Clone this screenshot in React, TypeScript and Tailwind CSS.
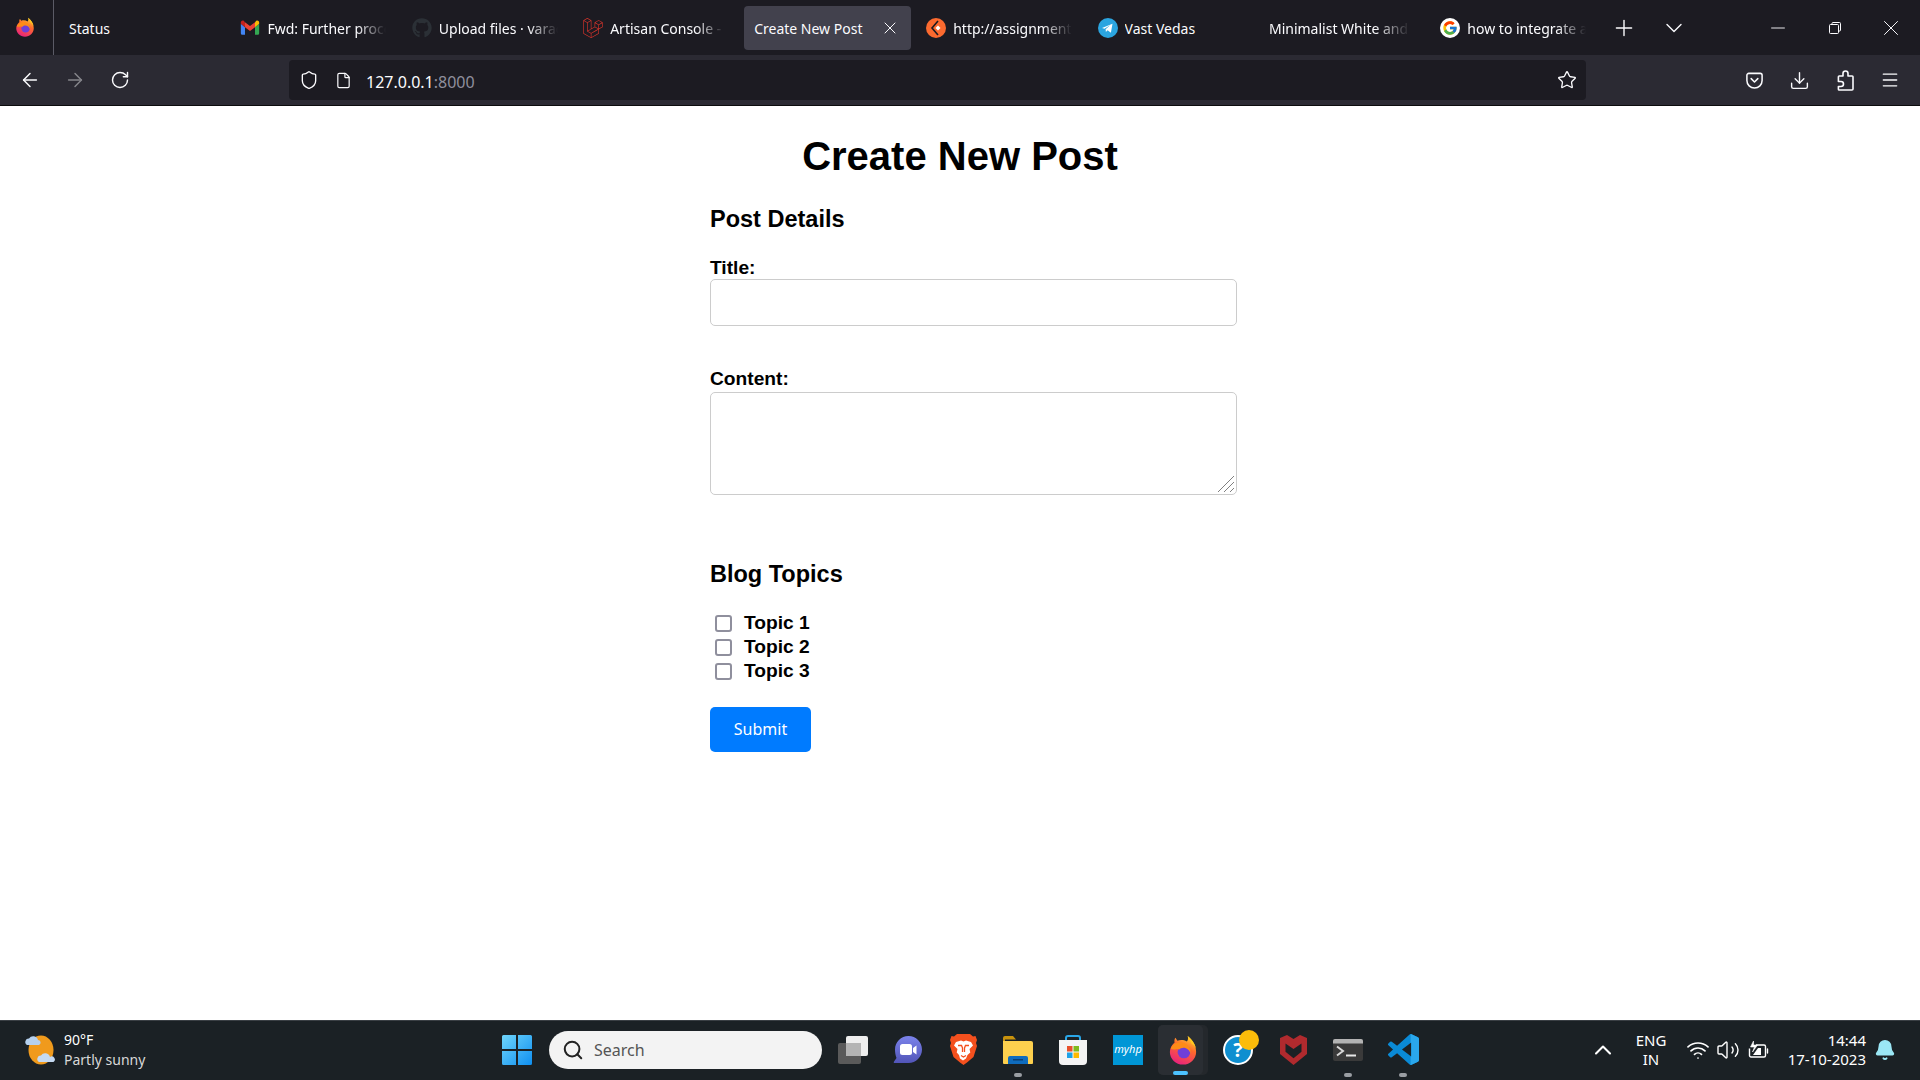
import { ArrowLeft, ArrowRight, RotateCw, Shield, File, Star, Download, Menu, Plus, ChevronDown, Minus, X, Search, Wifi, Volume2, Bell, ChevronUp } from 'lucide-react';
import { FaGithub, FaLaravel } from 'react-icons/fa';
import { FcGoogle } from 'react-icons/fc';
import type { ReactNode } from 'react';

const uiFont = "font-['Noto_Sans','Open_Sans',sans-serif]";

function FirefoxIcon({ size = 20, id }: { size?: number; id: string }) {
  return (
    <svg width={size} height={size} viewBox="0 0 32 32">
      <defs>
        <linearGradient id={id} x1="0.75" y1="0" x2="0.3" y2="1">
          <stop offset="0" stopColor="#ffd52e" />
          <stop offset="0.4" stopColor="#ff6a2b" />
          <stop offset="1" stopColor="#e8207f" />
        </linearGradient>
      </defs>
      <path d="M21 1c1 3 0 5-1 6-3-2-7-2-10-1L8 3C7 4 6.500 6 7 8c-3 3-5 6-5 10 0 7.500 6.300 13.500 14 13.500S30 25.500 30 18c0-7-4-13-9-17z" fill={`url(#${id})`} />
      <circle cx="17" cy="18" r="6.800" fill="#6f3fd8" />
      <path d="M3 15c1-5 7-8 12-7 6 1 10 6 9 12-1-4-4-6.500-7.500-6.500-2 0-3.500.8-4.500 2l-3-.5C7 16 5 15.500 3 15z" fill="#ff8b17" />
      <path d="M21 1c4 3 8 8 9 14-1-3-3-5-5-6-1-3-3-5-4-8z" fill="#ffc91f" />
    </svg>
  );
}

function GmailIcon() {
  return (
    <svg width="20" height="20" viewBox="0 0 24 24">
      <path d="M2 20h4V11L1 7v11a2 2 0 0 0 1 2z" fill="#4285f4" />
      <path d="M18 20h4a2 2 0 0 0 1-2V7l-5 4z" fill="#34a853" />
      <path d="M18 5v6l5-4V5.500c0-2-2.200-3-3.700-1.900z" fill="#fbbc04" />
      <path d="M6 11V5l6 4.500L18 5v6l-6 4.500z" fill="#ea4335" />
      <path d="M1 5.500V7l5 4V5L4.700 3.600C3.200 2.500 1 3.500 1 5.500z" fill="#c5221f" />
    </svg>
  );
}

function KiteIcon() {
  return (
    <svg width="20" height="20" viewBox="0 0 20 20">
      <circle cx="10" cy="10" r="10" fill="#fc6a2f" />
      <path d="M12 3 6 10l6 7" fill="none" stroke="#1c1b22" strokeWidth="1.600" />
      <path d="M12 7.500 14.500 10 12 12.500 9.500 10z" fill="#fff" />
    </svg>
  );
}

function TelegramIcon() {
  return (
    <svg width="20" height="20" viewBox="0 0 20 20">
      <circle cx="10" cy="10" r="10" fill="#2ba5e0" />
      <path d="M4 10l10.500-4.300-1.600 9-3.300-2.400-1.700 1.600-.3-2.700 4.800-4.100-5.900 3.600z" fill="#fff" />
    </svg>
  );
}

function PocketIcon() {
  return (
    <svg width="19" height="19" viewBox="0 0 20 20" fill="none" stroke="#fbfbfe" strokeWidth="1.600" strokeLinecap="round" strokeLinejoin="round">
      <path d="M2 4.500A2 2 0 0 1 4 2.500h12a2 2 0 0 1 2 2V10a8 8 0 0 1-16 0z" />
      <path d="M6.500 8 10 11.500 13.500 8" />
    </svg>
  );
}

function ExtensionIcon() {
  return (
    <svg width="19" height="21" viewBox="0 0 19 21" fill="none" stroke="#fbfbfe" strokeWidth="1.600" strokeLinejoin="round">
      <path d="M7 6V3.500a2.500 2.500 0 0 1 5 0V6h4.200a.8.8 0 0 1 .8.8V19a1 1 0 0 1-1 1H3.200a.8.8 0 0 1-.8-.8v-2.700H5a2.500 2.500 0 0 0 0-5H2.400V6.800a.8.8 0 0 1 .8-.8H7z" />
    </svg>
  );
}

function RestoreIcon() {
  return (
    <svg width="12" height="12" viewBox="0 0 12 12" fill="none" stroke="#fbfbfe" strokeWidth="1">
      <rect x="0.500" y="2.500" width="9" height="9" rx="1" />
      <path d="M3 2.500V1.500a1 1 0 0 1 1-1h6.500a1 1 0 0 1 1 1V8a1 1 0 0 1-1 1h-1" />
    </svg>
  );
}

function Tab({ icon, label, fade = true, textWidth = 'w-[119px]', className = '' }: { icon?: ReactNode; label: string; fade?: boolean; textWidth?: string; className?: string }) {
  return (
    <div className={`flex h-[44px] w-[171.400px] shrink-0 items-center ${className}`}>
      {icon && <span className="mr-[7px] flex h-5 w-5 shrink-0 items-center justify-center">{icon}</span>}
      <span
        className={`block ${textWidth} overflow-hidden whitespace-nowrap pt-[2px] text-[14px] text-[#fbfbfe] ${fade ? '[mask-image:linear-gradient(to_right,black_75%,transparent)]' : ''}`}
      >
        {label}
      </span>
    </div>
  );
}

function WindowsLogo() {
  return (
    <svg width="30" height="30" viewBox="0 0 30 30">
      <defs>
        <linearGradient id="winLogo" x1="0" y1="0" x2="1" y2="1">
          <stop offset="0" stopColor="#6fd5fb" />
          <stop offset="1" stopColor="#0f8ff0" />
        </linearGradient>
      </defs>
      <path d="M0 1.500A1.500 1.500 0 0 1 1.500 0H14v14H0zM16 0h12.500A1.500 1.500 0 0 1 30 1.500V14H16zM0 16h14v14H1.500A1.500 1.500 0 0 1 0 28.500zM16 16h14v12.500a1.500 1.500 0 0 1-1.500 1.500H16z" fill="url(#winLogo)" />
    </svg>
  );
}

function WeatherIcon() {
  return (
    <svg width="32" height="30" viewBox="0 0 32 30">
      <ellipse cx="17" cy="15" rx="12.500" ry="14.500" fill="#f09a1c" />
      <path d="M3 10a3.500 3.500 0 0 1 2-6.500 5 5 0 0 1 9 1.500 2.600 2.600 0 0 1 1 5z" fill="#b5d0ee" />
      <path d="M15 27a3.500 3.500 0 0 1 2-6.500 5 5 0 0 1 9 1.500 2.600 2.600 0 0 1 3.500 5z" fill="#c5daf2" />
    </svg>
  );
}

function TaskViewIcon() {
  return (
    <svg width="30" height="30" viewBox="0 0 30 30">
      <rect x="0" y="8" width="23" height="21" rx="2" fill="#5a5a5a" />
      <rect x="8" y="1" width="22" height="20" rx="2" fill="#eeeeee" />
      <rect x="8" y="8" width="15" height="13" fill="#b4b4b4" />
    </svg>
  );
}

function ChatIcon() {
  return (
    <svg width="30" height="30" viewBox="0 0 30 30">
      <defs>
        <linearGradient id="chatFill" x1="0.5" y1="0" x2="0.5" y2="1">
          <stop offset="0" stopColor="#7b83eb" />
          <stop offset="1" stopColor="#5255b8" />
        </linearGradient>
      </defs>
      <path d="M15.500 1C23 1 29 7 29 14.500S23 28 15.500 28H1.500c-.8 0-1-.8-.6-1.300L3.500 23C2.500 20.500 2 17.500 2 14.500 2 7 8 1 15.500 1z" fill="url(#chatFill)" />
      <rect x="7" y="9" width="12" height="11" rx="2.500" fill="#fff" />
      <path d="M20 13l3.500-2.500v9L20 17z" fill="#fff" />
    </svg>
  );
}

function BraveIcon() {
  return (
    <svg width="27" height="31" viewBox="0 0 27 31">
      <path d="M7 0h13l3 2.500 2.500-.5L27 6l-1 3 1 3-3.500 11L17 28.500 13.500 31 10 28.500 3.500 23 0 12l1-3-1-3 1.500-4L4 2.500z" fill="#f4501e" />
      <path d="M6 8l5-1.500 2.500 1 2.500-1L21 8l2 3.500-3.500 3.500.8 3.500-2.800 2.500-1.500 3.500-3 2-3-2L9 21 6.700 18.500 7.500 15 4 11.500z" fill="#fff" />
      <path d="M8 11.500h3.500l1 2.500v4M19 11.500h-3.500l-1 2.500v4M11 21.500l2.500 1.500 2.500-1.500" fill="none" stroke="#f4501e" strokeWidth="1.300" />
    </svg>
  );
}

function FolderIcon() {
  return (
    <svg width="30" height="28" viewBox="0 0 30 28">
      <path d="M0 2a2 2 0 0 1 2-2h8l3 3.500H2V6H0z" fill="#c9930d" />
      <path d="M0 5h28a2 2 0 0 1 2 2v20a1 1 0 0 1-1 1H1a1 1 0 0 1-1-1z" fill="#fdd04e" />
      <path d="M5 28v-6a2 2 0 0 1 2-2h16a2 2 0 0 1 2 2v6z" fill="#0f6cbd" />
      <rect x="10" y="23" width="10" height="1.500" fill="#0b3f73" />
    </svg>
  );
}

function StoreIcon() {
  return (
    <svg width="30" height="30" viewBox="0 0 30 30">
      <path d="M8 7V3a2 2 0 0 1 2-2h10a2 2 0 0 1 2 2v4" fill="none" stroke="#2aa7e8" strokeWidth="2" />
      <path d="M1 5h28v21a4 4 0 0 1-4 4H5a4 4 0 0 1-4-4z" fill="#f4f4f4" />
      <rect x="9" y="11" width="5.500" height="5.500" fill="#e8502b" />
      <rect x="15.500" y="11" width="5.500" height="5.500" fill="#7fba1c" />
      <rect x="9" y="17.500" width="5.500" height="5.500" fill="#1ea2e8" />
      <rect x="15.500" y="17.500" width="5.500" height="5.500" fill="#ffb900" />
    </svg>
  );
}

function McAfeeIcon() {
  return (
    <svg width="27" height="30" viewBox="0 0 27 30">
      <path fillRule="evenodd" d="M0 3 7 0l6.500 4L20 0l7 3v16L13.500 30 0 19zM5.500 8.500v8.300l8 6.400 8-6.400V8.500l-8 5.500z" fill="#b02a2e" />
    </svg>
  );
}

function TerminalIcon() {
  return (
    <svg width="30" height="22" viewBox="0 0 30 22">
      <rect width="30" height="22" rx="2" fill="#3a3a3a" />
      <path d="M0 2a2 2 0 0 1 2-2h26a2 2 0 0 1 2 2v2.500H0z" fill="#b3b3b3" />
      <path d="M4 7.500l6 4.500-6 4.500" fill="none" stroke="#d8d8d8" strokeWidth="2" />
      <rect x="13" y="15.500" width="10" height="2" fill="#e8e8e8" />
    </svg>
  );
}

function VsCodeIcon() {
  return (
    <svg width="31" height="31" viewBox="0 0 24 24">
      <path d="M23.150 2.587L18.210.21a1.494 1.494 0 0 0-1.705.29l-9.460 8.630-4.120-3.128a.999.999 0 0 0-1.276.057L.327 7.261A1 1 0 0 0 .326 8.740L3.899 12 .326 15.260a1 1 0 0 0 .001 1.479L1.650 17.940a.999.999 0 0 0 1.276.057l4.120-3.128 9.460 8.630a1.492 1.492 0 0 0 1.704.29l4.942-2.377A1.500 1.500 0 0 0 24 20.060V3.939a1.500 1.500 0 0 0-.850-1.352zm-5.146 14.861L10.826 12l7.178-5.448v10.896z" fill="#0a8ad6" />
      <path d="M17.500 0.080a1.500 1.500 0 0 1 .71.130l4.940 2.377A1.500 1.500 0 0 1 24 3.939v16.121a1.500 1.500 0 0 1-.85 1.352l-4.940 2.377a1.500 1.500 0 0 1-.71.13v-6.400l.504-.071V6.552l-.504.38z" fill="#2aa7ec" />
    </svg>
  );
}

function BatteryIcon() {
  return (
    <svg width="21" height="20" viewBox="0 0 21 20" fill="none" stroke="#fff" strokeWidth="1.400" strokeLinejoin="round">
      <path d="M8 5h8a1.500 1.500 0 0 1 1.500 1.500v9A1.500 1.500 0 0 1 16 17H3a1.500 1.500 0 0 1-1.500-1.500v-7" />
      <path d="M19.500 9v4" strokeLinecap="round" />
      <path d="M5.500 1 2.500 7h4l-2 5 5-7h-4z" fill="#fff" strokeWidth="0.600" />
      <path d="M5 15l5-7h3v7z" fill="#fff" stroke="none" />
    </svg>
  );
}

function TaskbarItem({ children, dot, active }: { children: ReactNode; dot?: boolean; active?: boolean }) {
  return (
    <div className={`relative flex h-[50px] w-[50px] items-center justify-center rounded-[5px] ${active ? 'bg-[#24282c]' : ''}`}>
      {active && <span className="absolute inset-y-0 left-0 w-[45px] rounded-[5px] bg-[#2a2e33]" />}
      <span className="relative flex items-center justify-center">{children}</span>
      {dot && <span className="absolute bottom-[-2px] left-[21px] h-[4px] w-[8px] rounded-full bg-[#9a9ea3]" />}
      {active && <span className="absolute bottom-0 left-[15px] h-[4px] w-[15px] rounded-full bg-[#4cc2ff]" />}
    </div>
  );
}

function Topic({ label }: { label: string }) {
  return (
    <label className="flex h-[24.300px] items-center text-[19.200px] font-bold text-black">
      <input type="checkbox" className="ml-[5px] mr-[12px] h-[17px] w-[17px] appearance-none rounded-[3px] border-2 border-[#8f8f9d] bg-white" />
      {label}
    </label>
  );
}

export default function App() {
  return (
    <div className={`flex h-screen w-[1920px] flex-col overflow-hidden bg-white ${uiFont}`}>
      {/* Tab strip */}
      <div className="flex h-[55px] shrink-0 items-center bg-[#1c1b22]">
        <div className="flex h-full w-[54px] shrink-0 items-center justify-center border-r border-[#5b5b66] pb-[2px] pr-[4px]">
          <FirefoxIcon id="ffTab" />
        </div>
        <Tab label="Status" className="ml-[15px]" fade={false} />
        <Tab icon={<GmailIcon />} label="Fwd: Further processing" />
        <Tab icon={<FaGithub size={20} color="#2b3036" />} label="Upload files · varadk" />
        <div className="flex w-[161px] shrink-0">
          <Tab icon={<FaLaravel size={20} color="#d9342b" />} label="Artisan Console - Laravel" textWidth="w-[114px]" />
        </div>
        <div className="flex h-[44px] w-[167px] shrink-0 items-center rounded-[4px] bg-[#42414d] pl-[10px] pr-[11px]">
          <span className="whitespace-nowrap pt-[2px] text-[14px] text-[#fbfbfe]">Create New Post</span>
          <X size={20} strokeWidth={1.200} color="#fbfbfe" className="ml-auto" />
        </div>
        <Tab icon={<KiteIcon />} label="http://assignments.local" className="ml-[15px]" />
        <Tab icon={<TelegramIcon />} label="Vast Vedas" fade={false} />
        <Tab label="Minimalist White and Black" textWidth="w-[141px]" />
        <Tab icon={<span className="flex h-5 w-5 items-center justify-center rounded-full bg-white"><FcGoogle size={16} /></span>} label="how to integrate a form" />
        <Plus size={26} strokeWidth={1.300} color="#fbfbfe" className="ml-[-1px] shrink-0" />
        <ChevronDown size={28} strokeWidth={1.200} color="#fbfbfe" className="ml-[23px] shrink-0" />
        <span className="ml-[70px] flex w-[40px] shrink-0 justify-center"><Minus size={22} strokeWidth={1} color="#fbfbfe" /></span>
        <span className="ml-[17px] flex w-[40px] shrink-0 justify-center"><RestoreIcon /></span>
        <span className="ml-[16px] flex w-[40px] shrink-0 justify-center"><X size={26} strokeWidth={0.900} color="#fbfbfe" /></span>
      </div>

      {/* Toolbar */}
      <div className="flex h-[50px] shrink-0 items-center bg-[#2b2a33]">
        <ArrowLeft size={22} strokeWidth={1.600} color="#fbfbfe" className="ml-[19px]" />
        <ArrowRight size={22} strokeWidth={1.600} color="#85858b" className="ml-[23px]" />
        <RotateCw size={20} strokeWidth={1.700} color="#fbfbfe" className="ml-[24px]" />
        <div className="ml-[159px] flex h-[40px] w-[1297px] items-center rounded-[4px] bg-[#1c1b22]">
          <Shield size={20} strokeWidth={1.600} color="#fbfbfe" className="ml-[10px]" />
          <File size={17} strokeWidth={1.700} color="#fbfbfe" className="ml-[16px]" />
          <span className="ml-[14px] pt-[3px] text-[16px] text-[#fbfbfe]">
            127.0.0.1<span className="text-[#8f8f9d]">:8000</span>
          </span>
          <Star size={20} strokeWidth={1.600} color="#fbfbfe" className="ml-auto mr-[9px]" />
        </div>
        <span className="ml-[159px]"><PocketIcon /></span>
        <Download size={21} strokeWidth={1.600} color="#fbfbfe" className="ml-[25px]" />
        <span className="ml-[26px]"><ExtensionIcon /></span>
        <Menu size={20} strokeWidth={1.600} color="#fbfbfe" className="ml-[25px]" />
      </div>
      <div className="h-px shrink-0 bg-[#0c0c0d]" />

      {/* Page */}
      <main className="min-h-0 flex-1 bg-white font-['Liberation_Sans',Arial,sans-serif] text-black">
        <div className="mx-auto w-[500px] pt-[27px]">
          <h1 className="text-center text-[40px] font-bold leading-[46px]">Create New Post</h1>
          <h2 className="mt-[27px] text-[23.500px] font-bold leading-[26px]">Post Details</h2>
          <form className="mt-[24px]">
            <label htmlFor="title" className="block text-[19.200px] font-bold leading-[23px]">Title:</label>
            <input id="title" type="text" className="block h-[47px] w-[527px] rounded-[5px] border border-[#cccccc] bg-white" />
            <label htmlFor="content" className="mt-[41px] block pb-[2px] text-[19.200px] font-bold leading-[23px]">Content:</label>
            <div className="relative w-[527px]">
              <textarea id="content" className="block h-[103px] w-[527px] resize-none rounded-[5px] border border-[#cccccc] bg-white" />
              <svg width="18" height="18" viewBox="0 0 18 18" className="absolute bottom-[2px] right-[2px]" stroke="#808080" strokeWidth="1" fill="none">
                <path d="M1 17 17 1M7 17 17 7M13 17l4-4" />
              </svg>
            </div>
            <h2 className="mt-[66px] text-[23.500px] font-bold leading-[26px]">Blog Topics</h2>
            <div className="mt-[24px]">
              <Topic label="Topic 1" />
              <Topic label="Topic 2" />
              <Topic label="Topic 3" />
            </div>
            <button type="button" className={`mt-[23px] block h-[45px] w-[101px] rounded-[5px] bg-[#007bff] text-[16px] text-white ${uiFont}`}>
              Submit
            </button>
          </form>
        </div>
      </main>

      {/* Windows taskbar */}
      <div className="flex h-[60px] shrink-0 items-center border-t border-[#3a3f44] bg-[#1b2125] pb-[2px] text-white">
        <span className="ml-[24px]"><WeatherIcon /></span>
        <div className="ml-[8px] w-[100px] text-[14px] leading-[20px]">
          <div>90°F</div>
          <div className="whitespace-nowrap text-[#d8d8d8]">Partly sunny</div>
        </div>
        <span className="ml-[338px]"><WindowsLogo /></span>
        <div className="ml-[17px] flex h-[38px] w-[273px] items-center rounded-full bg-[#f3f3f3]">
          <Search size={22} strokeWidth={2.200} color="#222" className="ml-[13px]" />
          <span className="ml-[10px] text-[16px] text-[#555]">Search</span>
        </div>
        <div className="ml-[6px] flex items-center gap-[5px]">
          <TaskbarItem><TaskViewIcon /></TaskbarItem>
          <TaskbarItem><ChatIcon /></TaskbarItem>
          <TaskbarItem><BraveIcon /></TaskbarItem>
          <TaskbarItem dot><FolderIcon /></TaskbarItem>
          <TaskbarItem><StoreIcon /></TaskbarItem>
          <TaskbarItem>
            <span className="flex h-[30px] w-[30px] items-center justify-center bg-[#0096d6] text-[11px] italic text-white">myhp</span>
          </TaskbarItem>
          <TaskbarItem active><FirefoxIcon size={30} id="ffTask" /></TaskbarItem>
          <TaskbarItem>
            <span className="relative flex h-[30px] w-[30px] items-center justify-center rounded-full border-2 border-white bg-[#0f8fd0] text-[20px] font-bold text-white">
              ?
              <span className="absolute right-[-8px] top-[-7px] h-[20px] w-[20px] rounded-full bg-[#fbbc0a]" />
            </span>
          </TaskbarItem>
          <TaskbarItem><McAfeeIcon /></TaskbarItem>
          <TaskbarItem dot><TerminalIcon /></TaskbarItem>
          <TaskbarItem dot><VsCodeIcon /></TaskbarItem>
        </div>
        <ChevronUp size={28} strokeWidth={1.800} color="#fff" className="ml-[161px]" />
        <div className="ml-[14px] w-[40px] text-center text-[15px] leading-[19px]">
          <div>ENG</div>
          <div>IN</div>
        </div>
        <span className="ml-[12px] flex w-[30px] justify-center"><Wifi size={24} strokeWidth={1.700} color="#fff" /></span>
        <span className="flex w-[30px] justify-center"><Volume2 size={24} strokeWidth={1.400} color="#fff" /></span>
        <span className="flex w-[30px] justify-center"><BatteryIcon /></span>
        <div className="ml-auto text-right text-[15px] leading-[19px]">
          <div>14:44</div>
          <div>17-10-2023</div>
        </div>
        <Bell size={22} fill="#9be7f5" color="#9be7f5" className="ml-[8px] mr-[24px]" />
      </div>
    </div>
  );
}
